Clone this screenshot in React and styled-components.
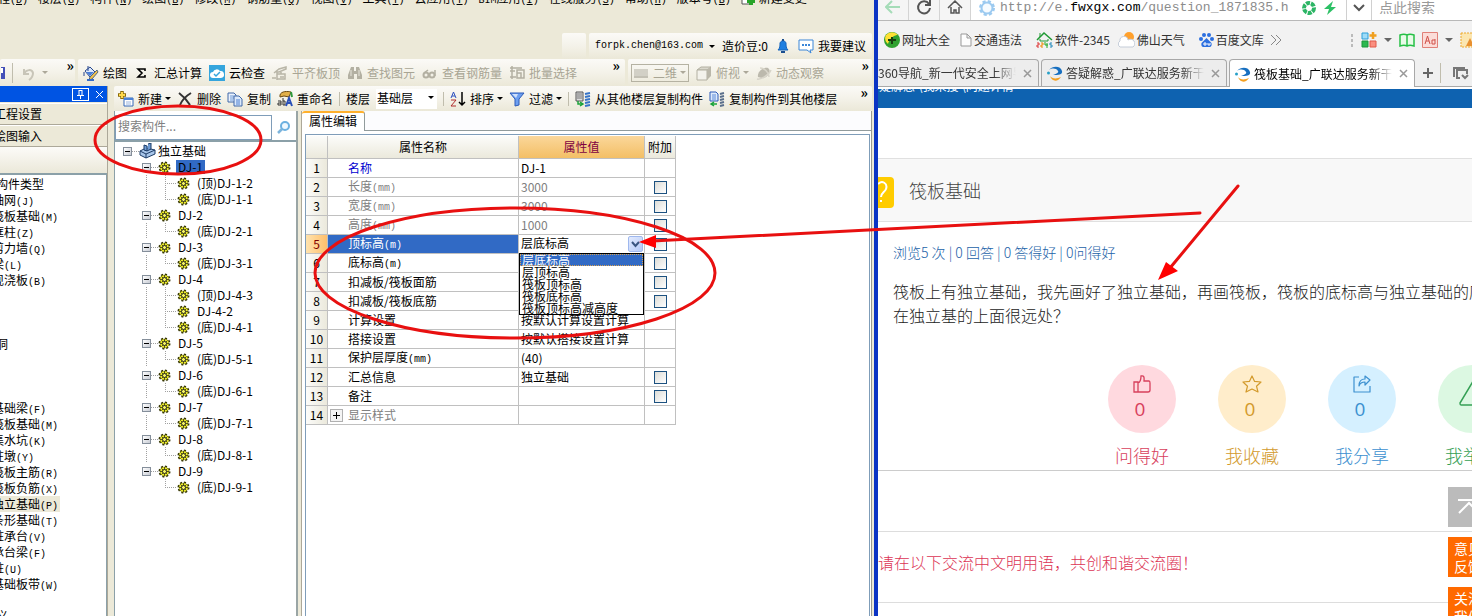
import React from 'react'
import styled, { createGlobalStyle, css } from 'styled-components'

const GlobalStyle = createGlobalStyle`
    * { box-sizing: border-box; }
    body { margin: 0; overflow: hidden; background: #ece9d8; }
    button, input, select { font: inherit; color: inherit; margin: 0; padding: 0; border: 0; background: none; }
    svg { display: block; flex: none; }
`

const Screen = styled.div`
    position: relative;
    display: grid;
    grid-template-columns: 19fr 13fr;
    height: 100vh;
    overflow: hidden;
    font-family: "Noto Sans CJK SC", "Liberation Sans", sans-serif;
    font-size: 12px;
    line-height: 16px;
    color: #000;
    white-space: nowrap;
`

/* ---------- modelling program ---------- */
const Program = styled.div`
    display: flex;
    flex-direction: column;
    min-width: 0;
    background: #ece9d8;
    overflow: hidden;
`
const MenuBar = styled.nav`
    display: flex;
    align-items: flex-start;
    gap: 10px;
    height: 33px;
    margin-left: -14px;
    overflow: hidden;
`
const MenuItem = styled.button`
    display: flex;
    gap: 4px;
    height: 16px;
    margin-top: -10px;
`
const Mono = styled.span`
    font-family: "Liberation Mono", monospace;
    font-size: 10px;
`
const barFill = css`
    background: linear-gradient(#fbfaf7, #f4f2e9 50%, #ebe8d8);
    border-radius: 2px;
`
const BarRow = styled.div`
    display: flex;
    gap: 3px;
    height: ${p => p.$h}px;
    justify-content: ${p => p.$end ? 'flex-end' : 'flex-start'};
    padding-right: 2px;
`
const Bar = styled.div`
    ${barFill}
    display: flex;
    align-items: center;
    gap: ${p => p.$gap || 7}px;
    padding: 0 ${p => p.$pad || 4}px;
    flex: ${p => p.$grow ? '1 1 0' : 'none'};
    width: ${p => p.$w ? p.$w + 'px' : 'auto'};
    min-width: 0;
    overflow: hidden;
`
const ToolButton = styled.button`
    display: flex;
    align-items: center;
    gap: 4px;
    flex: none;
    color: ${p => p.$off ? '#a8a594' : 'inherit'};
    border: ${p => p.$framed ? '1px solid #b5b2a2' : '0'};
    padding: ${p => p.$framed ? '0 2px' : '0'};
`
const Caret = styled.i`
    margin-left: -1px;
    border: 3px solid transparent;
    border-top-color: ${p => p.$off ? '#aca899' : '#000'};
    border-bottom: 0;
`
const Sep = styled.i`
    width: 1px;
    height: ${p => p.$tall ? 20 : 14}px;
    background: #c0bdad;
`
const More = styled.button`
    align-self: flex-start;
    margin-left: auto;
    font-size: 14px;
    line-height: 12px;
    font-weight: 700;
`
const FloorSelect = styled.div`
    display: flex;
    align-items: center;
    flex: none;
    width: 61px;
    height: 20px;
    background: #fff;
    padding: 0 3px 2px 1px;
    select { appearance: none; flex: 1; min-width: 0; }
`
const Workspace = styled.div`
    display: flex;
    flex: 1;
    min-height: 0;
`
const Sidebar = styled.aside`
    display: flex;
    flex-direction: column;
    width: 108px;
    margin-right: 6px;
    overflow: hidden;
    border-right: 1px solid #aca899;
`
const SideTitle = styled.div`
    display: flex;
    justify-content: flex-end;
    align-items: center;
    flex: none;
    gap: 6px;
    height: 16px;
    background: #0054e3;
    padding-right: 3px;
    margin-bottom: 1px;
`
const PinBox = styled.button`
    display: grid;
    place-items: center;
    width: 17px;
    height: 13px;
    border: 1px solid #fff;
`
const SideButton = styled.button`
    flex: none;
    height: 22px;
    text-align: left;
    text-indent: -6px;
    background: #ece9d8;
    border-top: 1px solid #fff;
    border-bottom: 1px solid #aca899;
`
const SideGap = styled.div`
    flex: none;
    height: 26px;
    background: linear-gradient(#fcfbf8, #ebe8d9);
`
const SideList = styled.ul`
    flex: 1 1 0;
    min-height: 0;
    margin: 0;
    padding: 1px 0 0;
    list-style: none;
    background: #fff;
    border-top: 2px solid #8ba0a8;
    border-right: 1px solid #8ba0a8;
`
const SideItem = styled.li`
    height: 16px;
    width: max-content;
    margin-left: -${p => p.$cut || 8}px;
    padding-right: 2px;
    background: ${p => p.$on ? '#ece9d8' : 'none'};
`
const MainArea = styled.div`
    display: flex;
    flex-direction: column;
    flex: 1;
    min-width: 0;
`
const Panels = styled.div`
    display: flex;
    flex: 1;
    min-height: 0;
    gap: 3px;
`
const TreePanel = styled.section`
    display: flex;
    flex-direction: column;
    width: 184px;
    background: #fff;
    border-right: 2px solid #9aa5a5;
    border-left: 1px solid #8ba0a8;
`
const SearchRow = styled.div`
    display: flex;
    align-items: center;
    padding-top: 4px;
    gap: 4px;
    height: 31px;
    border-bottom: 2px solid #8ba0a8;
    input {
        flex: none;
        width: 157px;
        height: 25px;
        border: 1px solid #7f9db9;
        padding: 0 0 4px 2px;
    }
    input::placeholder { color: #808080; opacity: 1; }
`
const Tree = styled.ul`
    margin: 0;
    padding: 1px 0 0;
    list-style: none;
`
const TreeRow = styled.li`
    display: flex;
    align-items: center;
    height: 16px;
    padding-left: ${p => p.$pad}px;
`
const dots = '#a0a0a0 0 1px, transparent 1px 2px'
const Rail = styled.i`
    align-self: stretch;
    width: 19px;
    background: ${p => p.$hide ? 'none' : `repeating-linear-gradient(${dots}) 0 0 / 1px 100% no-repeat`};
`
const Elbow = styled.i`
    align-self: stretch;
    width: 12px;
    background:
        repeating-linear-gradient(${dots}) 0 0 / 1px ${p => p.$last ? '8px' : '100%'} no-repeat,
        repeating-linear-gradient(90deg, ${dots}) 0 8px / 12px 1px no-repeat;
`
const Fold = styled.button`
    display: grid;
    place-items: center;
    width: 9px;
    height: 9px;
    border: 1px solid #848e9a;
    background: linear-gradient(135deg, #fff, #c8ccd4);
    &::after { content: ""; width: 5px; height: 1px; background: #000; }
`
const Stub = styled.i`
    width: 7px;
    height: 1px;
    background: repeating-linear-gradient(90deg, ${dots});
`
const TreeText = styled.span`
    margin-left: ${p => p.$gap}px;
    padding: 0 2px;
    line-height: 14px;
    background: ${p => p.$on ? '#316ac5' : 'none'};
`
const PropPanel = styled.section`
    display: flex;
    flex-direction: column;
    flex: 1;
    min-width: 0;
    background: #fff;
    border-left: 1px solid #aca899;
    border-right: 1px solid #9a9a90;
    margin-right: 2px;
`
const TabStrip = styled.div`
    height: 20px;
    background: #fcfcfe;
    border-bottom: 1px solid #919b9c;
`
const PropTab = styled.button`
    display: block;
    height: 20px;
    width: 63px;
    line-height: 16px;
    padding-bottom: 2px;
    background: #fff;
    border-top: 2px solid #ffb02c;
    border-right: 1px solid #919b9c;
    border-radius: 3px 3px 0 0;
`
const PropBody = styled.div`
    flex: 1;
    margin: 3px 1px 0 3px;
    border: 1px solid #7f9db9;
    border-bottom: 0;
    padding-top: 1px;
`
const Grid = styled.table`
    table-layout: fixed;
    width: 370px;
    border-spacing: 0;
    th, td {
        height: 19px;
        padding: 0;
        font-weight: 400;
        line-height: 16px;
        border-right: 1px solid #c0c0c0;
        border-bottom: 1px solid #c0c0c0;
    }
    thead th {
        height: 23px;
        background: linear-gradient(#fcfcfa, #ebe9dc);
    }
    thead th:nth-child(3) {
        color: #800040;
        background: linear-gradient(#fbd79a, #f3bf66);
    }
`
const RowNo = styled.th`
    background: ${p => p.$on ? 'linear-gradient(90deg, #ffe3ae, #ffbf6b)' : 'linear-gradient(90deg, #fcfcfa, #ebe9dc)'};
    color: ${p => p.$on ? '#800000' : '#000'};
`
const NameCell = styled.td`
    background: ${p => p.$on ? '#316ac5' : 'none'};
    color: ${p => p.$color || '#000'};
`
const NameBox = styled.div`
    display: flex;
    align-items: center;
    padding-left: ${p => p.$plus ? 2 : 20}px;
    height: 18px;
    gap: 5px;
`
const Plus = styled.button`
    display: grid;
    place-items: center;
    width: 13px;
    height: 13px;
    border: 1px solid #b0b0b0;
    background: #f4f4f4;
`
const ValueCell = styled.td`
    position: relative;
    text-indent: 2px;
    color: ${p => p.$color || '#000'};
`
const Check = styled.input`
    appearance: none;
    display: block;
    width: 13px;
    height: 13px;
    margin: 0 auto;
    border: 1px solid #1c5180;
    background: linear-gradient(135deg, #dcdcd7, #fff);
`
const Combo = styled.div`
    display: flex;
    align-items: center;
    height: 18px;
    select { appearance: none; flex: 1; height: 18px; text-indent: 2px; padding-bottom: 2px; }
`
const ComboArrow = styled.button`
    display: grid;
    place-items: center;
    width: 15px;
    height: 16px;
    margin-right: 1px;
    border: 1px solid #9fb8ee;
    border-radius: 2px;
    background: linear-gradient(135deg, #e3ebfe, #b5c9f7);
`
const Options = styled.ul`
    position: absolute;
    z-index: 2;
    top: 18px;
    left: 0;
    width: 125px;
    margin: 0;
    padding: 0;
    list-style: none;
    background: #fff;
    border: 1px solid #000;
`
const Option = styled.li`
    height: 12px;
    line-height: 12px;
    color: ${p => p.$on ? '#fff' : '#000'};
    background: ${p => p.$on ? '#316ac5' : 'none'};
    outline: ${p => p.$on ? '1px dotted #d8a050' : 'none'};
    outline-offset: -1px;
`

/* ---------- browser ---------- */
const Browser = styled.div`
    position: relative;
    display: flex;
    flex-direction: column;
    min-width: 0;
    overflow: hidden;
    background: #fff;
    border-left: 4px solid #0b34c4;
    color: #444;
`
const AddressRow = styled.div`
    display: flex;
    height: 21px;
    background: #f5f5f5;
    border-bottom: 1px solid #b8b8b8;
`
const NavButton = styled.button`
    display: grid;
    place-items: start center;
    width: 31px;
    border-right: 1px solid #d4d4d4;
`
const Address = styled.div`
    display: flex;
    align-items: flex-start;
    flex: 1 1 0;
    gap: 5px;
    padding: 0 8px;
    background: #fff;
    color: #8c8c8c;
`
const Url = styled.span`
    flex: 1;
    line-height: 16px;
    font-family: "Liberation Mono", monospace;
    font-size: 13px;
    b { font-weight: 400; color: #000; }
`
const UrlMore = styled.button`
    display: grid;
    place-items: start center;
    width: 26px;
    padding-top: 4px;
    background: #fff;
    border: solid #d0d0d0;
    border-width: 0 1px;
`
const WebSearch = styled.input`
    width: 100px;
    height: 14px;
    && { padding-left: 7px; background: #fff; font-size: 14px; }
    &::placeholder { color: #999; opacity: 1; }
`
const SearchHold = styled.div`
    background: #fff;
`
const Bookmarks = styled.div`
    display: flex;
    align-items: center;
    height: 38px;
    padding-left: 6px;
    background: #f2f2f2;
    color: #333;
`
const Bookmark = styled.a`
    display: flex;
    align-items: center;
    gap: 2px;
    margin-right: ${p => p.$after || 12}px;
    color: inherit;
    text-decoration: none;
`
const Extras = styled.div`
    display: flex;
    align-items: center;
    gap: 7px;
    margin-left: auto;
    margin-right: -4px;
    i { border: 4px solid transparent; border-top-color: #666; border-bottom: 0; }
`
const TabRow = styled.div`
    display: flex;
    gap: 2px;
    height: 28px;
    background: #f0f0f0;
    border-bottom: 1px solid #a8a8a8;
`
const BrowserTab = styled.div`
    display: flex;
    align-items: center;
    flex: none;
    gap: 3px;
    width: 186px;
    height: ${p => p.$on ? 28 : 27}px;
    padding-left: 5px;
    margin-left: ${p => p.$cut ? '-25px' : '0'};
    border: 1px solid #a8a8a8;
    border-bottom: 0;
    border-radius: 4px 4px 0 0;
    background: ${p => p.$on ? '#fff' : '#ededed'};
    color: ${p => p.$on ? '#000' : '#333'};
    button { margin-left: 4px; }
`
const TabTitle = styled.span`
    width: 138px;
    overflow: hidden;
    mask-image: linear-gradient(90deg, #000 84%, transparent);
`
const TabTools = styled.div`
    display: flex;
    align-items: center;
    gap: 4px;
    padding-left: 3px;
`
const SiteBand = styled.div`
    height: 19px;
    margin-top: 2px;
    background: #0e62b0;
    color: #fff;
    overflow: hidden;
    span { display: block; margin: -11px 0 0 -11px; }
`
const Question = styled.header`
    display: flex;
    align-items: center;
    gap: 15px;
    height: 64px;
    margin-top: 50px;
    padding-top: 4px;
    background: #f8f8f8;
    border: solid #e0e0e0;
    border-width: 1px 0;
    h1 { margin: 0; padding-bottom: 4px; font-size: 18px; line-height: 24px; font-weight: 300; }
`
const QMark = styled.span`
    display: grid;
    place-items: center end;
    width: 16px;
    height: 31px;
    border-radius: 0 4px 4px 0;
    background: #fc0;
    overflow: hidden;
`
const Meta = styled.p`
    margin: 19px 0 0 15px;
    font-size: 14px;
    line-height: 22px;
    font-weight: 300;
    color: #1b62a8;
`
const Content = styled.p`
    margin: 16px 0 0 15px;
    font-size: 16px;
    line-height: 24px;
    font-weight: 300;
    color: #222;
`
const Actions = styled.div`
    display: flex;
    gap: 42px;
    height: 144px;
    padding: 38px 0 0 230px;
    border-bottom: 1px solid #ccc;
`
const Action = styled.button`
    display: flex;
    flex-direction: column;
    align-items: center;
    flex: none;
    width: 68px;
    font-size: 18px;
    line-height: 26px;
    font-weight: 300;
    color: ${p => p.$color};
`
const Disc = styled.span`
    display: flex;
    flex-direction: column;
    align-items: center;
    width: 68px;
    height: 68px;
    padding-top: 10px;
    margin-bottom: 9px;
    border-radius: 50%;
    background: ${p => p.$fill};
    font-size: 20px;
    line-height: 32px;
`
const Count = styled.span`
    padding-right: 4px;
    font-family: "Open Sans", sans-serif;
    font-weight: 400;
    font-size: 19px;
`
const Notice = styled.p`
    display: flex;
    align-items: center;
    height: 72px;
    margin: 60px 0 0;
    padding-bottom: 10px;
    font-size: 16px;
    font-weight: 300;
    color: #dc3454;
    border: solid #ddd;
    border-width: 1px 0;
`
const SideTools = styled.div`
    position: absolute;
    right: 0;
    top: 487px;
    display: flex;
    flex-direction: column;
    gap: 10px;
    width: 24px;
`
const SideTool = styled.button`
    height: 40px;
    padding-left: 6px;
    overflow: hidden;
    text-align: left;
    font-size: 14px;
    line-height: 18px;
    color: #fff;
    background: ${p => p.$gray ? '#bbb' : '#ff6a00'};
`
const Marks = styled.svg`
    position: absolute;
    top: 0;
    left: 0;
    z-index: 5;
    pointer-events: none;
`

/* ---------- icons ---------- */
const Svg = ({ w = 16, h = 16, children, ...rest }) => (
    <svg width={w} height={h} viewBox={`0 0 ${w} ${h}`} fill="none" aria-hidden="true" {...rest}>{children}</svg>
)
const icons = {
    paint: <Svg><path d="M2 6l5-4 5 5-5 5z" fill="#dce8fa" stroke="#26458c" /><path d="M5 6V1M1 7v4" stroke="#26458c" /><path d="M3 7h8l-4 4z" fill="#4a7fd8" /><path d="M14 5l1 2-6 7-3 1 1-3z" fill="#f2c24a" stroke="#55677c" /><path d="M4 15h7" stroke="#346bc8" strokeWidth="2" /></Svg>,
    sigma: <Svg><path d="M11 6V4H4l4 4-4 4h7v-2" stroke="#000" strokeWidth="1.600" /></Svg>,
    cloud: <Svg><path d="M0 0h16v16H0z" fill="#35a5dd" /><path d="M4 13a3 3 0 010-6 4 4 0 017-1 3.500 3.500 0 011 7z" fill="#fff" /><path d="M5 9l2 2 4-4" stroke="#35a5dd" strokeWidth="1.500" /></Svg>,
    align: <Svg><path d="M2 8l5-4 7-2v2L7 7H5v8M5 9h8v5H5M0 13h4M9 6v3M8 12h4" stroke="#b8b5a7" strokeWidth="1.500" /></Svg>,
    find: <Svg><path d="M4 2h3v4h2V2h3l3 8v4h-5V9H7v5H1v-4z" fill="#b3b0a2" /><path d="M4 5v6M12 5v6" stroke="#e8e6dc" /></Svg>,
    glasses: <Svg><circle cx="4" cy="10" r="2.500" stroke="#b3b0a2" strokeWidth="2" /><circle cx="10" cy="10" r="2.500" stroke="#b3b0a2" strokeWidth="2" /><path d="M2 8l4-3M13 11V5" stroke="#b3b0a2" strokeWidth="1.500" /></Svg>,
    batch: <Svg><path d="M3 1v13M1 3h12M1 6h5M1 12h6M8 5h7v8H8zM8 8h4v5" stroke="#b3b0a2" strokeWidth="1.500" /></Svg>,
    plane: <Svg w={15}><path d="M0 4h14v9H0z" fill="#d2d0c6" /><path d="M0 12h14" stroke="#b3b0a2" /></Svg>,
    cube: <Svg><path d="M1 5l4-3h10l-4 3z" fill="#d9d7cc" stroke="#b3b0a2" /><path d="M1 5h10v10H1z" fill="#f3f2ec" stroke="#b3b0a2" /><path d="M11 5l4-3v9l-4 4z" fill="#bab7aa" /></Svg>,
    orbit: <Svg><path d="M2 12C1 7 7 2 12 3c4 3 0 10-6 10z" fill="#bcb9ad" /><path d="M1 14c4 1 12-4 14-9M4 3c5 0 9 5 9 9" stroke="#d8d5ca" strokeWidth="1.500" /></Svg>,
    add: <Svg><path d="M6 7h9v8H6z" fill="#fff" stroke="#3568b8" /><path d="M6 7h9v2H6z" fill="#4a82d8" /><path d="M8 11h5M8 13h5" stroke="#9ab5dd" /><path d="M4 0v8M0 4h8" stroke="#8a6a08" strokeWidth="3.500" /><path d="M4 1v6M1 4h6" stroke="#ffd84a" strokeWidth="2" /></Svg>,
    del: <Svg><path d="M2 2c4 3 8 7 11 12M14 2C9 5 5 9 3 14" stroke="#333" strokeWidth="2" /></Svg>,
    copy: <Svg><path d="M1 2h6l2 2v7H1z" fill="#eaf1fc" stroke="#4068a8" /><path d="M3 5h4M3 7h4M3 9h3" stroke="#6f9bd8" /><path d="M7 5h5l3 3v7H7z" fill="#dce9fb" stroke="#4068a8" /><path d="M9 9h4M9 11h4M9 13h4" stroke="#4a7fd0" /></Svg>,
    rename: <Svg><path d="M3 4c1-4 8-4 11-3l-2 5-5-1-4 1z" fill="#e2b04a" stroke="#6b4a12" /><path d="M1 10h3v4H1v-2h3M6 7v7h2v-4H6" stroke="#333" /><path d="M9 15l3-8 3 8M10 12h4" stroke="#2a50b8" strokeWidth="2" /><path d="M14 1l1 5" stroke="#2e9a3c" strokeWidth="2" /></Svg>,
    sort: <Svg><path d="M1 7l2.500-6L6 7M2 5h3" stroke="#2c50c0" /><path d="M1 9h5l-5 6h5" stroke="#b02c2c" /><path d="M12 1v13M9 11l3 3 3-3" stroke="#000" strokeWidth="1.500" /></Svg>,
    funnel: <Svg><path d="M1 2h14L10 8v6l-4 1V8z" fill="#6d9ff0" stroke="#2c5bb8" /><path d="M3 3h6L7 7z" fill="#cfe0fb" /></Svg>,
    floorCopy: <Svg><path d="M1 1h7v9H1z" fill="#ddd" stroke="#555" /><path d="M2 3h5M2 5h5M2 7h5" stroke="#777" /><path d="M3 10v3h4M5 11l3 2-3 2" stroke="#1ba33a" strokeWidth="1.500" /><path d="M10 3l5-1M10 6l5-1M10 9l5-1M10 12l5-1M10 15l5-1" stroke="#3674c8" strokeWidth="2" /></Svg>,
    floorPaste: <Svg><path d="M1 1h6l2 2v7H1z" fill="#dce9fb" stroke="#2c5bb8" /><path d="M3 4h4M3 6h4M3 8h4" stroke="#5c8ad8" /><path d="M3 13h5M5 11l-3 2 3 2" stroke="#1ba33a" strokeWidth="1.500" /><path d="M11 3l4-1M11 6l4-1M11 9l4-1M11 12l4-1M11 15l4-1" stroke="#5a6f8c" strokeWidth="2" /></Svg>,
    gear: <Svg w={13} h={13}><circle cx="6.500" cy="6.500" r="5" stroke="#333300" strokeWidth="2" strokeDasharray="2 1.900" /><circle cx="6.500" cy="6.500" r="4.500" fill="#ecec28" stroke="#6b6b10" strokeWidth=".5" /><path d="M6.500 2v9M2 6.500h9M3.500 3.500l6 6M9.500 3.500l-6 6" stroke="#555510" /><circle cx="6.500" cy="6.500" r="2" fill="#f8f860" stroke="#222" /></Svg>,
    base: <Svg w={17}><path d="M1 8l6-3 9 2v4l-9 4-6-3z" fill="#a8c6ea" stroke="#1d3c66" /><path d="M1 8l6 3 9-4M7 11v4" stroke="#1d3c66" /><path d="M5 2l3 1v5l-3-1zM9 1l3-1v6L8 8" fill="#6d9bd4" stroke="#1d3c66" /></Svg>,
    lens: <Svg><circle cx="9" cy="6" r="4" stroke="#6bb0e0" strokeWidth="2" fill="#eef8ff" /><path d="M6 9l-4 4" stroke="#7cb4dc" strokeWidth="2.500" /></Svg>,
    bell: <Svg><path d="M3 12c2-2 2-4 2-7 1-3 5-3 6 0 0 3 0 5 2 7z" fill="#1f7fe0" stroke="#1866bd" /><path d="M8 1v2M6 14h4" stroke="#1b4f8f" strokeWidth="2" /></Svg>,
    chat: <Svg><path d="M1 2h14v10h-3l1 3-4-3H1z" fill="#fff" stroke="#3b86d8" /><path d="M4 7h2M7 7h2M10 7h2" stroke="#3b86d8" strokeWidth="2" /></Svg>,
    save: <Svg w={4}><path d="M0 2h4v12H0z" fill="#4450b8" /><path d="M0 3h2v5H0z" fill="#fff" /></Svg>,
    undo: <Svg><path d="M4 4v5h5M4 9c2-5 8-5 9-1 0 3-1 5-4 7" stroke="#c8c5b8" strokeWidth="2" /></Svg>,
    newDoc: <Svg w={14}><path d="M1 1h9v13H1z" fill="#fff" stroke="#555" /><path d="M6 11h8M10 7v8" stroke="#28a428" strokeWidth="4" /></Svg>,
}
const web = {
    nav: <Svg><circle cx="8" cy="8" r="8" fill="#2fa12f" /><path d="M2 3a8 8 0 0112 0c-3 0-8 2-10 9-4-3-3-7-2-9z" fill="#ffe034" /><path d="M8 5v7M4 8h8" stroke="#173f0e" strokeWidth="2" /></Svg>,
    page: <Svg w={12}><path d="M1 2h6l4 4v8H1zM7 2v4h4" fill="#fdfdfd" stroke="#999" /></Svg>,
    house: <Svg w={17} h={16}><path d="M1 8l7-7 8 7" stroke="#209a35" strokeWidth="1.500" /><path d="M4 5V1M4 7v2h8V7" stroke="#209a35" /><path d="M1 11h2v2H1v2h2" stroke="#d33" /><path d="M5 11h2v2H5v2h2" stroke="#e80" /><path d="M9 10v3h3M11 11v5" stroke="#2a2" /><path d="M16 11h-2v2h2v2h-2" stroke="#28b" /></Svg>,
    weather: <Svg w={17}><circle cx="11" cy="5" r="5" fill="#ffa02c" /><path d="M2 15a3.500 3.500 0 010-6 4 4 0 018-1 4 4 0 015 7z" fill="#fff" stroke="#c4ccd8" /></Svg>,
    paw: <Svg w={15}><circle cx="5" cy="3" r="2" fill="#2c6fe0" /><circle cx="10" cy="3" r="2" fill="#2c6fe0" /><circle cx="2" cy="7" r="2" fill="#2c6fe0" /><circle cx="13" cy="7" r="2" fill="#2c6fe0" /><path d="M7.500 6l5 5c1 5-3 4-5 4s-6 1-5-4z" fill="#2c6fe0" /><path d="M5 11h2v2H5zM9 11v2h2v-2" stroke="#fff" /></Svg>,
    swirl: <Svg><path d="M2 5C6 0 14 1 15 6c1 4-4 4-9 4 4-1 6-3 5-4C9 3 5 3 2 5z" fill="#176fc0" /><path d="M3 11c2 3 7 3 11 1-3 5-9 5-11-1z" fill="#f4a020" /><circle cx="1.500" cy="8" r="1.500" fill="#27a0c8" /></Svg>,
    close: <Svg w={9} h={9}><path d="M1 1l7 7M8 1L1 8" stroke="#999" strokeWidth="1.500" /></Svg>,
    thumb: <Svg w={18} h={18}><path d="M1 7h4v10H1zM5 8c3-1 3-4 3-7 4-1 3 3 3 5h5c1 0 1 1 1 2v7c0 1-1 2-2 2H5" stroke="currentColor" strokeWidth="1.300" /></Svg>,
    star: <Svg w={20} h={18}><path d="M10 1l2.600 5.400 6.400.6-4.500 4.200L16 17l-6-3-6 3 1.500-5.800L1 7l6.400-.6z" stroke="currentColor" strokeWidth="1.200" strokeLinejoin="round" /></Svg>,
    share: <Svg w={18} h={18}><path d="M6 2H1v15h16v-6M6 11c0-5 2-7 6-7V1l5 4-5 5V7c-3 0-5 1-6 4z" stroke="currentColor" strokeWidth="1.200" strokeLinejoin="round" /></Svg>,
    warn: <Svg w={26} h={34}><path d="M13 8l12 20c0 1 0 2-1 2H2c-1 0-1-1-1-2z" stroke="currentColor" strokeWidth="1.500" /></Svg>,
}

/* ---------- data ---------- */
const menus = [['工程', 'D'], ['楼层', 'G'], ['构件', 'N'], ['绘图', 'B'], ['修改', 'M'], ['钢筋量', 'Q'], ['视图', 'V'], ['工具', 'T'], ['云应用', 'Y'], ['应用', 'I', 'BIM'], ['在线服务', 'S'], ['帮助', 'H'], ['版本号', 'B']]
const drawTools = [['paint', '绘图'], ['sigma', '汇总计算'], ['cloud', '云检查'], ['align', '平齐板顶', 1], ['find', '查找图元', 1], ['glasses', '查看钢筋量', 1], ['batch', '批量选择', 1]]
const types = ['轴网(J)', '筏板基础(M)', '框柱(Z)', '剪力墙(Q)', '梁(L)', '现浇板(B)', '', '', '', '洞', '', '', '', '基础梁(F)', '筏板基础(M)', '集水坑(K)', '柱墩(Y)', '筏板主筋(R)', '筏板负筋(X)', '独立基础(P)', '条形基础(T)', '桩承台(V)', '承台梁(F)', '桩(U)', '基础板带(W)', '', '义']
const nodes = [
    ['DJ-1', '(顶)DJ-1-2', '(底)DJ-1-1'],
    ['DJ-2', '(底)DJ-2-1'],
    ['DJ-3', '(底)DJ-3-1'],
    ['DJ-4', '(顶)DJ-4-3', 'DJ-4-2', '(底)DJ-4-1'],
    ['DJ-5', '(底)DJ-5-1'],
    ['DJ-6', '(底)DJ-6-1'],
    ['DJ-7', '(底)DJ-7-1'],
    ['DJ-8', '(底)DJ-8-1'],
    ['DJ-9', '(底)DJ-9-1'],
]
const GRAY = '#808080'
const props = [
    { name: '名称', value: 'DJ-1', color: '#0000d0' },
    { name: '长度', unit: '(mm)', value: '3000', color: GRAY, check: true },
    { name: '宽度', unit: '(mm)', value: '3000', color: GRAY, check: true },
    { name: '高度', unit: '(mm)', value: '1000', color: GRAY, check: true },
    { name: '顶标高', unit: '(m)', check: true, on: true, color: '#fff' },
    { name: '底标高', unit: '(m)', check: true },
    { name: '扣减板/筏板面筋', check: true },
    { name: '扣减板/筏板底筋', check: true },
    { name: '计算设置', value: '按默认计算设置计算' },
    { name: '搭接设置', value: '按默认搭接设置计算' },
    { name: '保护层厚度', unit: '(mm)', value: '(40)' },
    { name: '汇总信息', value: '独立基础', check: true },
    { name: '备注', check: true },
    { name: '显示样式', color: GRAY, plus: true },
]
const levels = ['层底标高', '层顶标高', '筏板顶标高', '筏板底标高', '筏板顶标高减高度']
const actions = [
    { icon: 'thumb', label: '问得好', color: '#d8405c', fill: '#ffd9df', count: 0 },
    { icon: 'star', label: '我收藏', color: '#d39a2c', fill: '#ffedcb', count: 0 },
    { icon: 'share', label: '我分享', color: '#3c90d0', fill: '#d5f0ff', count: 0 },
    { icon: 'warn', label: '我举报', color: '#35a055', fill: '#dcf8e2' },
]

const Tool = ({ icon, text, off, caret, framed }) => (
    <ToolButton $off={off} $framed={framed}>
        {icons[icon]}{text}{caret && <Caret $off={off} />}
    </ToolButton>
)

const TreeView = () => (
    <Tree>
        <TreeRow $pad={8}><Fold aria-label="折叠" /><Stub />{icons.base}<TreeText $gap={0}>独立基础</TreeText></TreeRow>
        {nodes.map(([name, ...kids], i) => (
            <React.Fragment key={name}>
                <TreeRow $pad={27}>
                    <Fold aria-label="折叠" /><Stub />{icons.gear}
                    <TreeText $gap={5} $on={i === 0}>{name}</TreeText>
                </TreeRow>
                {kids.map((kid, k) => (
                    <TreeRow key={kid} $pad={31}>
                        <Rail $hide={i === nodes.length - 1} />
                        <Elbow $last={k === kids.length - 1} />
                        {icons.gear}
                        <TreeText $gap={5}>{kid}</TreeText>
                    </TreeRow>
                ))}
            </React.Fragment>
        ))}
    </Tree>
)

const PropertyGrid = () => (
    <Grid>
        <colgroup><col width="22" /><col width="191" /><col width="126" /><col width="31" /></colgroup>
        <thead>
            <tr><th /><th>属性名称</th><th>属性值</th><th>附加</th></tr>
        </thead>
        <tbody>
            {props.map((row, i) => (
                <tr key={row.name}>
                    <RowNo $on={row.on}>{i + 1}</RowNo>
                    <NameCell $on={row.on} $color={row.color}>
                        <NameBox $plus={row.plus}>
                            {row.plus && <Plus aria-label="展开"><Svg w={9} h={9}><path d="M1 4.500h7M4.500 1v7" stroke="#000" /></Svg></Plus>}
                            <span>{row.name}{row.unit && <Mono>{row.unit}</Mono>}</span>
                        </NameBox>
                    </NameCell>
                    <ValueCell $color={row.color === GRAY ? GRAY : '#000'}>
                        {row.on ? (
                            <Combo>
                                <select aria-label={row.name} defaultValue={levels[0]}>
                                    {levels.map(l => <option key={l}>{l}</option>)}
                                </select>
                                <ComboArrow aria-label="展开列表"><Svg w={9} h={7}><path d="M1 1l3.500 4L8 1" stroke="#3a5580" strokeWidth="2" /></Svg></ComboArrow>
                                <Options role="listbox">
                                    {levels.map((l, n) => <Option key={l} role="option" $on={n === 0}>{l}</Option>)}
                                </Options>
                            </Combo>
                        ) : row.value}
                    </ValueCell>
                    <td>{row.check && <Check type="checkbox" aria-label={'附加 ' + row.name} />}</td>
                </tr>
            ))}
        </tbody>
    </Grid>
)

const ProgramWindow = () => (
    <Program>
        <MenuBar>
            {menus.map(([name, key, prefix]) => (
                <MenuItem key={name}>
                    <span>{prefix && <Mono>{prefix}</Mono>}{name}<Mono>(<u>{key}</u>)</Mono></span>
                </MenuItem>
            ))}
            <MenuItem>{icons.newDoc}新建变更</MenuItem>
        </MenuBar>
        <BarRow $h={26} $end>
            <Bar $w={24} />
            <Bar $pad={6}>
                <ToolButton><Mono>forpk.chen@163.com</Mono></ToolButton>
                <Caret />
                <span>造价豆:0</span>
                {icons.bell}
                <Tool icon="chat" text="我要建议" />
            </Bar>
        </BarRow>
        <BarRow $h={27}>
            <Bar $w={75} $pad={1}>
                {icons.save}<Sep $tall />{icons.undo}<Caret $off />
                <More>»</More>
            </Bar>
            <Bar $w={547} $pad={5}>
                {drawTools.map(([icon, text, off]) => <Tool key={text} icon={icon} text={text} off={off} />)}
                <More>»</More>
            </Bar>
            <Bar $grow $pad={3}>
                <Tool icon="plane" text="二维" off caret framed />
                <Tool icon="cube" text="俯视" off caret />
                <Tool icon="orbit" text="动态观察" off />
                <More>»</More>
            </Bar>
        </BarRow>
        <Workspace>
            <Sidebar>
                <SideTitle>
                    <PinBox aria-label="固定"><Svg w={9} h={9}><path d="M3 0v5M6 0v5M3 .5h3M1 5.500h7M4.500 6v3" stroke="#fff" /></Svg></PinBox>
                    <button aria-label="关闭"><Svg w={9} h={9}><path d="M1 1l7 7M8 1L1 8" stroke="#fff" /></Svg></button>
                </SideTitle>
                <SideButton>工程设置</SideButton>
                <SideButton>绘图输入</SideButton>
                <SideGap />
                <SideList>
                    <SideItem $cut={4}>构件类型</SideItem>
                    {types.map((t, i) => {
                        const [name, key] = t.split('(')
                        return (
                            <SideItem key={i} $cut={t.length === 1 ? 4 : 8} $on={t === '独立基础(P)'}>
                                {name}{key && <Mono>({key}</Mono>}
                            </SideItem>
                        )
                    })}
                </SideList>
            </Sidebar>
            <MainArea>
                <BarRow $h={25}>
                    <Bar $grow $gap={6}>
                        <Tool icon="add" text="新建" caret />
                        <Tool icon="del" text="删除" />
                        <Tool icon="copy" text="复制" />
                        <Tool icon="rename" text="重命名" />
                        <Sep />
                        <label htmlFor="floor">楼层</label>
                        <FloorSelect>
                            <select id="floor"><option>基础层</option></select><Caret />
                        </FloorSelect>
                        <Sep />
                        <Tool icon="sort" text="排序" caret />
                        <Tool icon="funnel" text="过滤" caret />
                        <Sep />
                        <Tool icon="floorCopy" text="从其他楼层复制构件" />
                        <Tool icon="floorPaste" text="复制构件到其他楼层" />
                        <More>»</More>
                    </Bar>
                </BarRow>
                <Panels>
                    <TreePanel>
                        <SearchRow>
                            <input aria-label="搜索构件" placeholder="搜索构件..." />
                            <button aria-label="搜索">{icons.lens}</button>
                        </SearchRow>
                        <TreeView />
                    </TreePanel>
                    <PropPanel>
                        <TabStrip><PropTab>属性编辑</PropTab></TabStrip>
                        <PropBody><PropertyGrid /></PropBody>
                    </PropPanel>
                </Panels>
            </MainArea>
        </Workspace>
    </Program>
)

const tabs = [['360导航_新一代安全上网导航'], ['答疑解惑_广联达服务新干线'], ['筏板基础_广联达服务新干线', 1]]

const BrowserWindow = () => (
    <Browser>
        <AddressRow>
            <NavButton aria-label="后退"><Svg><path d="M15 7H1M7 1L1 7l6 6" stroke="#a5dcb8" strokeWidth="2" /></Svg></NavButton>
            <NavButton aria-label="刷新"><Svg><path d="M13 4a6 6 0 101 4M14 0v5H9" stroke="#555" strokeWidth="2" /></Svg></NavButton>
            <NavButton aria-label="主页"><Svg><path d="M1 8l7-7 7 7M4 7v6h3v-3h2v3h3V7" stroke="#555" strokeWidth="1.500" /></Svg></NavButton>
            <Address>
                <Svg><circle cx="8" cy="8" r="6.500" stroke="#9ccaf0" strokeWidth="3" strokeDasharray="3 2.100" /><circle cx="8" cy="8" r="5.500" stroke="#9ccaf0" strokeWidth="2" fill="#f6fbff" /></Svg>
                <Url>http://e.<b>fwxgx.com</b>/question_1871835.h</Url>
                <Svg><circle cx="8" cy="8" r="5" stroke="#2cb565" strokeWidth="4" strokeDasharray="4 1" /></Svg>
                <Svg><path d="M11 1L2 9h5l-2 6 9-8H9z" fill="#2cc065" /></Svg>
            </Address>
            <UrlMore aria-label="历史"><Svg w={12} h={9}><path d="M1 1l5 5 5-5" stroke="#555" strokeWidth="2" /></Svg></UrlMore>
            <SearchHold><WebSearch aria-label="搜索" placeholder="点此搜索" /></SearchHold>
        </AddressRow>
        <Bookmarks>
            <Bookmark href="#" $after={10}>{web.nav}网址大全</Bookmark>
            <Bookmark href="#" $after={14}>{web.page}交通违法</Bookmark>
            <Bookmark href="#" $after={8}>{web.house}软件-2345</Bookmark>
            <Bookmark href="#" $after={14}>{web.weather}佛山天气</Bookmark>
            <Bookmark href="#" $after={6}>{web.paw}百度文库</Bookmark>
            <button aria-label="更多书签"><Svg w={12} h={12}><path d="M1 1l5 5-5 5M6 1l5 5-5 5" stroke="#888" /></Svg></button>
            <Extras>
                <Svg w={3}><path d="M1 2v14" stroke="#bbb" strokeWidth="2" strokeDasharray="3 2" /></Svg>
                <Svg><path d="M1 1h6v6H1z" fill="#9fdcf8" stroke="#2c9fd8" /><path d="M12 0v7M8.500 3.500h7" stroke="#f0a020" strokeWidth="2.500" /><path d="M1 9h6v6H1z" fill="#2cb84f" stroke="#1c963c" /><path d="M9 9h6v6H9z" fill="#fa8f80" stroke="#e05848" /></Svg>
                <i />
                <Svg><path d="M1 3c3-1 5-1 7 0 2-1 4-1 7 0v11c-3-1-5-1-7 0-2-1-4-1-7 0zM8 3v11" fill="#e8fbe8" stroke="#26c046" strokeWidth="1.500" /></Svg>
                <Svg><path d="M.5.500h15v15H.5z" fill="#fbdcd8" stroke="#e08078" /><path d="M3 12l2.500-8L8 12M4 9h3M13 7v5h-3V8h3" stroke="#d05048" /></Svg>
                <i />
                <Svg><path d="M1 1h14v14H1z" fill="#fbe6b0" stroke="#eda82c" strokeDasharray="2 1" /><path d="M6 14l4-8 4 8z" fill="#e89030" /></Svg>
            </Extras>
        </Bookmarks>
        <TabRow>
            {tabs.map(([title, on], i) => (
                <BrowserTab key={title} $on={on} $cut={i === 0}>
                    {web.swirl}<TabTitle>{title}</TabTitle><button aria-label="关闭标签">{web.close}</button>
                </BrowserTab>
            ))}
            <TabTools>
                <button aria-label="新标签"><Svg><path d="M8 3v10M3 8h10" stroke="#666" strokeWidth="2" /></Svg></button>
                <Sep $tall />
                <button aria-label="恢复标签"><Svg w={24}><path d="M11 3h9M9 12V3h10" stroke="#777" strokeWidth="2" /><path d="M22 9V5H12v8h3" stroke="#777" strokeWidth="2" /><path d="M17 10l3 3 3-3" stroke="#777" strokeWidth="2" /></Svg></button>
            </TabTools>
        </TabRow>
        <SiteBand><span>答疑解惑 \我来搜 \问题详情</span></SiteBand>
        <Question>
            <QMark><Svg w={16} h={26}><path d="M0 5c4-4 10-1 8 5-1 3-5 4-5 8M3 21v2" stroke="#fff" strokeWidth="2" /></Svg></QMark>
            <h1>筏板基础</h1>
        </Question>
        <Meta>浏览5 次 | 0 回答 | 0 答得好 | 0问得好</Meta>
        <Content>
            筏板上有独立基础，我先画好了独立基础，再画筏板，筏板的底标高与独立基础的底标高相同<br />
            在独立基的上面很远处？
        </Content>
        <Actions>
            {actions.map(a => (
                <Action key={a.label} $color={a.color}>
                    <Disc $fill={a.fill}>{web[a.icon]}<Count>{a.count}</Count></Disc>
                    {a.label}
                </Action>
            ))}
        </Actions>
        <Notice>请在以下交流中文明用语，共创和谐交流圈！</Notice>
        <SideTools>
            <SideTool $gray aria-label="回到顶部"><Svg w={30} h={24}><path d="M4 5h22M5 18l10-10 10 10" stroke="#fff" strokeWidth="2" /></Svg></SideTool>
            <SideTool>意见<br />反馈</SideTool>
            <SideTool>关注<br />我们</SideTool>
        </SideTools>
    </Browser>
)

const App = () => (
    <Screen>
        <GlobalStyle />
        <ProgramWindow />
        <BrowserWindow />
        <Marks width="1472" height="616" viewBox="0 0 1472 616" fill="none" stroke="#e81010" strokeWidth="3">
            <ellipse cx="178" cy="140" rx="83" ry="34" />
            <ellipse cx="515" cy="273" rx="200" ry="65" />
            <path d="M1200 213L652 241M1238 186l-68 82" strokeLinecap="round" />
            <path d="M639 242l17-7v13zM1158 280l8-18 12 9z" fill="#f00" stroke="none" />
        </Marks>
    </Screen>
)

export default App
